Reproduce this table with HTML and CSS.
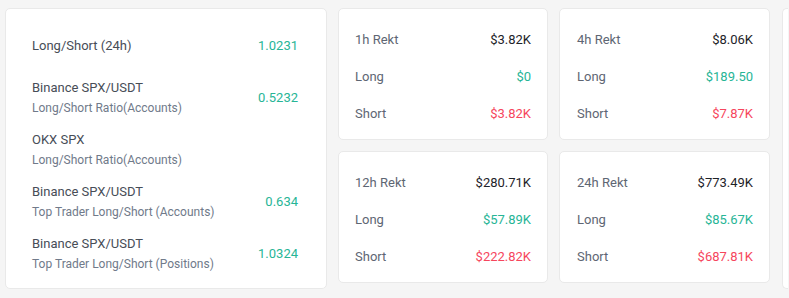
FILE: index.html
```html
<!DOCTYPE html>
<html>
<head>
<meta charset="utf-8">
<link rel="stylesheet" href="styles.css">
</head>
<body>
<div class="page">
  <div class="card ratios">
    <div class="ratio-row">
      <div class="ratio-label"><div class="main">Long/Short (24h)</div></div>
      <div class="val up">1.0231</div>
    </div>
    <div class="ratio-row">
      <div class="ratio-label"><div class="main">Binance SPX/USDT</div><div class="sub">Long/Short Ratio(Accounts)</div></div>
      <div class="val up">0.5232</div>
    </div>
    <div class="ratio-row">
      <div class="ratio-label"><div class="main">OKX SPX</div><div class="sub">Long/Short Ratio(Accounts)</div></div>
      <div class="val up"></div>
    </div>
    <div class="ratio-row">
      <div class="ratio-label"><div class="main">Binance SPX/USDT</div><div class="sub">Top Trader Long/Short (Accounts)</div></div>
      <div class="val up">0.634</div>
    </div>
    <div class="ratio-row">
      <div class="ratio-label"><div class="main">Binance SPX/USDT</div><div class="sub">Top Trader Long/Short (Positions)</div></div>
      <div class="val up">1.0324</div>
    </div>
  </div>
  <div class="rekt-grid">
    <div class="card rekt">
      <div class="rekt-row"><span class="lbl">1h Rekt</span><span class="amt">$3.82K</span></div>
      <div class="rekt-row"><span class="lbl">Long</span><span class="amt up">$0</span></div>
      <div class="rekt-row"><span class="lbl">Short</span><span class="amt down">$3.82K</span></div>
    </div>
    <div class="card rekt">
      <div class="rekt-row"><span class="lbl">4h Rekt</span><span class="amt">$8.06K</span></div>
      <div class="rekt-row"><span class="lbl">Long</span><span class="amt up">$189.50</span></div>
      <div class="rekt-row"><span class="lbl">Short</span><span class="amt down">$7.87K</span></div>
    </div>
    <div class="card rekt">
      <div class="rekt-row"><span class="lbl">12h Rekt</span><span class="amt">$280.71K</span></div>
      <div class="rekt-row"><span class="lbl">Long</span><span class="amt up">$57.89K</span></div>
      <div class="rekt-row"><span class="lbl">Short</span><span class="amt down">$222.82K</span></div>
    </div>
    <div class="card rekt">
      <div class="rekt-row"><span class="lbl">24h Rekt</span><span class="amt">$773.49K</span></div>
      <div class="rekt-row"><span class="lbl">Long</span><span class="amt up">$85.67K</span></div>
      <div class="rekt-row"><span class="lbl">Short</span><span class="amt down">$687.81K</span></div>
    </div>
  </div>
  <div class="card extra"></div>
</div>
</body>
</html>
```
FILE: styles.css
```css
* { box-sizing: border-box; }
html, body { margin: 0; padding: 0; }
body {
  background: #f5f5f5;
  font-family: Roboto, "Liberation Sans", sans-serif;
  color: #1e2329;
  width: 789px;
  height: 298px;
  overflow: hidden;
}
.page {
  display: flex;
  align-items: flex-start;
  gap: 11px;
  padding: 8px 0 0 5px;
  width: 789px;
  overflow: hidden;
}
.card {
  background: #fff;
  border: 1px solid #e9e9e9;
  border-radius: 5px;
  flex-shrink: 0;
}
.ratios {
  width: 322px;
  padding: 17px 28px 14px 26px;
  display: flex;
  flex-direction: column;
  gap: 12px;
}
.ratio-row {
  min-height: 40px;
  display: flex;
  align-items: center;
  justify-content: space-between;
}
.main {
  font-size: 13px;
  line-height: 20px;
  color: #474d57;
}
.sub {
  font-size: 12px;
  line-height: 20px;
  color: #707a8a;
}
.val {
  font-size: 13px;
  line-height: 20px;
}
.up { color: #27b596; }
.down { color: #f6465d; }
.rekt-grid {
  display: grid;
  grid-template-columns: 210px 211px;
  gap: 11px;
}
.rekt {
  height: 132px;
  padding: 21px 16px 15px 16px;
  display: flex;
  flex-direction: column;
  gap: 17px;
}
.rekt-grid .rekt:nth-child(2n) { padding-left: 17px; }
.rekt-row {
  display: flex;
  justify-content: space-between;
  font-size: 13px;
  line-height: 20px;
}
.lbl { color: #5e6673; }
.amt { color: #1e2329; }
.amt.up { color: #27b596; }
.amt.down { color: #f6465d; }
.extra {
  width: 6px;
  height: 281px;
  margin-left: 1px;
  border-right: none;
  border-radius: 5px 0 0 5px;
}
```
